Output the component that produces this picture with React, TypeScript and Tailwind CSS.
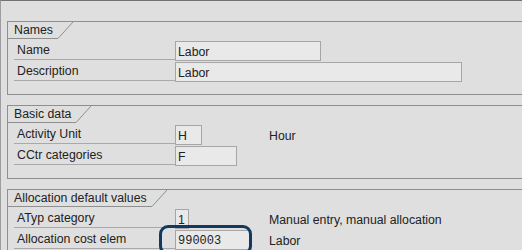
import React from 'react';

type Row = {
  label: string;
  value: string;
  inputW: string;
  desc?: string;
  mono?: boolean;
  ring?: boolean;
};

function Tab({ title }: { title: string }) {
  return (
    <div className="flex h-[17px]">
      <div className="h-full pl-[6px] pr-[5px] border-b border-[#8f8f8f] leading-[16px]">{title}</div>
      <svg width="15" height="17" viewBox="0 0 15 17" className="shrink-0">
        <line x1="0" y1="16.5" x2="15" y2="0" stroke="#8f8f8f" strokeWidth="1" />
      </svg>
    </div>
  );
}

function FieldRow({ row }: { row: Row }) {
  const input = (
    <div className={`relative h-[20px] mt-[2px] ${row.inputW} shrink-0 border border-[#a6a6a6] bg-[#e9e9e9] pl-[2px] pt-[1px] leading-[18px] ${row.mono ? "font-['Liberation_Mono'] text-[12px]" : ''}`}>
      {row.value}
      {row.ring && (
        <div className="absolute left-[-17px] top-[-6px] right-[-3px] bottom-[-6px] rounded-[9px] border-[3px] border-[#123a5e]" />
      )}
    </div>
  );

  return (
    <div className="flex h-[21px] ml-[6px]">
      <div className="w-[161px] shrink-0 h-full border-b border-[#a9a9a9] pl-[3px] pt-[2px] leading-[19px]">{row.label}</div>
      {row.desc !== undefined ? (
        <>
          <div className="w-[94px] shrink-0">{input}</div>
          <div className="pt-[2px] leading-[22px]">{row.desc}</div>
        </>
      ) : (
        input
      )}
    </div>
  );
}

function Group({ title, rows }: { title: string; rows: Row[] }) {
  return (
    <div className="w-[600px] border border-[#8f8f8f] pb-[13px]">
      <Tab title={title} />
      {rows.map((r) => (
        <FieldRow key={r.label} row={r} />
      ))}
    </div>
  );
}

export default function App() {
  return (
    <div className="w-[522px] h-[250px] overflow-hidden bg-[#dfdfdf] border-t border-l border-t-[#727272] border-l-[#9d9d9d] font-['Liberation_Sans',Arial,sans-serif] text-[12.3px] text-[#222]">
      <div className="pl-[6px] pt-[20px] flex flex-col gap-[10px]">
        <Group
          title="Names"
          rows={[
            { label: 'Name', value: 'Labor', inputW: 'w-[146px]' },
            { label: 'Description', value: 'Labor', inputW: 'w-[287px]' },
          ]}
        />
        <Group
          title="Basic data"
          rows={[
            { label: 'Activity Unit', value: 'H', inputW: 'w-[27px]', desc: 'Hour' },
            { label: 'CCtr categories', value: 'F', inputW: 'w-[62px]', desc: '' },
          ]}
        />
        <Group
          title="Allocation default values"
          rows={[
            { label: 'ATyp category', value: '1', inputW: 'w-[14px]', desc: 'Manual entry, manual allocation' },
            { label: 'Allocation cost elem', value: '990003', inputW: 'w-[75px]', desc: 'Labor', mono: true, ring: true },
          ]}
        />
      </div>
    </div>
  );
}
